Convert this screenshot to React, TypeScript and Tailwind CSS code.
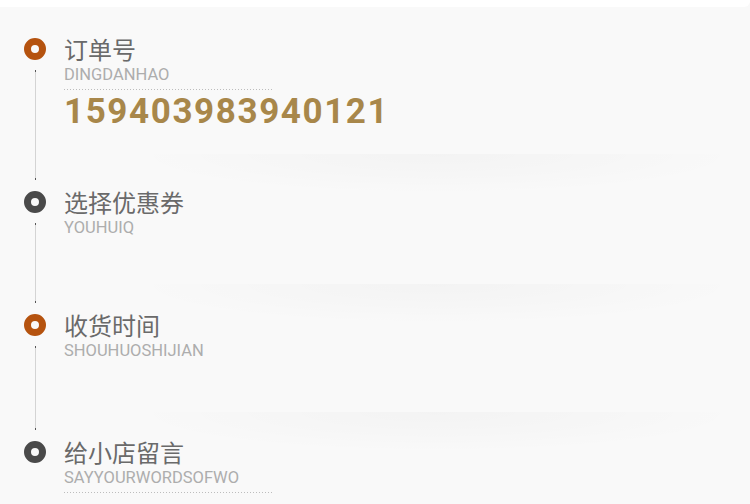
import React from "react"

type Step = {
    title: string
    sub: string
    ring: string
    height: string
    shadow?: string
    number?: string
    dotted?: boolean
    last?: boolean
}

const steps: Step[] = [
    { title: "订单号", sub: "DINGDANHAO", ring: "border-[#b5530f]", height: "h-[153px]", number: "159403983940121" },
    { title: "选择优惠券", sub: "YOUHUIQ", ring: "border-[#4a4a4a]", height: "h-[123px]", shadow: "top-[-37px]" },
    { title: "收货时间", sub: "SHOUHUOSHIJIAN", ring: "border-[#b5530f]", height: "h-[127px]", shadow: "top-[-30px]" },
    { title: "给小店留言", sub: "SAYYOURWORDSOFWO", ring: "border-[#4a4a4a]", height: "h-[63px]", shadow: "top-[-29px]", dotted: true, last: true },
]

function Dots() {
    return <div className="h-px w-[209px] bg-[linear-gradient(to_right,#bdbdbd_1px,transparent_1px)] bg-[length:3px_1px]" />
}

function StepRow({ step }: { step: Step }) {
    return (
        <div className={`relative flex ${step.height}`}>
            {step.shadow && (
                <div className={`absolute ${step.shadow} left-[106px] right-[6px] h-[40px] bg-[radial-gradient(ellipse_50%_100%_at_50%_0%,rgba(0,0,0,0.025),rgba(0,0,0,0.01)_55%,transparent_100%)]`} />
            )}
            <div className="relative flex w-[22px] flex-col items-center">
                <div className={`h-[22px] w-[22px] rounded-full border-[7px] ${step.ring}`} />
                {!step.last && (
                    <div className="mt-[10px] mb-[11px] flex w-px flex-1 flex-col justify-between bg-[#d4d4d4]">
                        <div className="h-[2px] bg-[#555]" />
                        <div className="h-[2px] bg-[#555]" />
                    </div>
                )}
            </div>
            <div className="relative ml-[18px] flex flex-col">
                <div className="text-[24px] leading-[22px] text-[#6a6a6a] font-['Noto_Sans_CJK_SC',sans-serif]">{step.title}</div>
                <div className="mt-[7px] text-[16.5px] leading-[16px] text-[#adadad] font-['Roboto',sans-serif]">{step.sub}</div>
                {step.number && (
                    <>
                        <div className="mt-[6px]"><Dots /></div>
                        <div className="mt-[4px] text-[35px] leading-[35px] font-bold tracking-[1.6px] text-[#a8874a] font-['Roboto',sans-serif]">{step.number}</div>
                    </>
                )}
                {step.dotted && <div className="mt-[6px]"><Dots /></div>}
            </div>
        </div>
    )
}

export default function App() {
    return (
        <div className="h-[504px] w-[750px] overflow-hidden bg-[#f9f9f9]">
            <div className="h-[7px] rounded-br-[6px] bg-white" />
            <div className="pl-[24px] pt-[31px]">
                {steps.map((step, index) => (
                    <StepRow step={step} key={index} />
                ))}
            </div>
        </div>
    )
}
